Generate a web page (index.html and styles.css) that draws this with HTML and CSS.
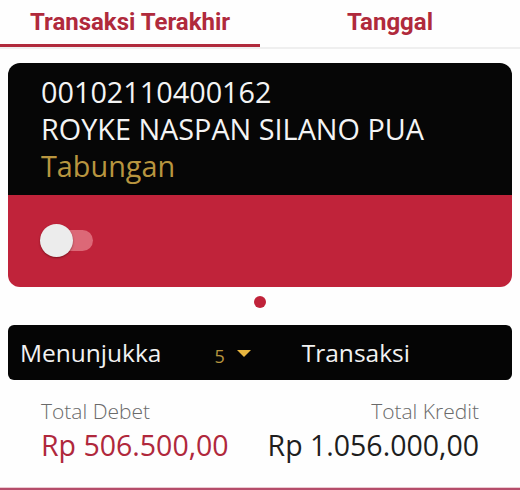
FILE: index.html
```html
<!DOCTYPE html>
<html>
<head>
<meta charset="utf-8">
<link rel="stylesheet" href="styles.css">
</head>
<body>
<div class="tabs">
  <div class="tab active">Transaksi Terakhir</div>
  <div class="tab">Tanggal</div>
</div>
<div class="card">
  <div class="card-top">
    <div class="line">00102110400162</div>
    <div class="line">ROYKE NASPAN SILANO PUA</div>
    <div class="line gold">Tabungan</div>
  </div>
  <div class="card-bottom">
    <div class="toggle"><span class="track"></span><span class="knob"></span></div>
  </div>
</div>
<div class="dots"><span class="dot"></span></div>
<div class="selector">
  <span class="sel-label">Menunjukka</span>
  <span class="sel-num">5</span>
  <span class="caret"></span>
  <span class="sel-label sel-right">Transaksi</span>
</div>
<div class="totals">
  <div class="col">
    <div class="t-label">Total Debet</div>
    <div class="t-amount red">Rp 506.500,00</div>
  </div>
  <div class="col right">
    <div class="t-label">Total Kredit</div>
    <div class="t-amount">Rp 1.056.000,00</div>
  </div>
</div>
<div class="bottom-line"></div>
</body>
</html>
```
FILE: styles.css
```css
html, body {
  margin: 0;
  padding: 0;
  background: #fefefe;
}
body {
  width: 520px;
  height: 490px;
  overflow: hidden;
  font-family: "Open Sans", "Liberation Sans", sans-serif;
}
.tabs {
  display: flex;
  height: 47px;
  border-bottom: 2px solid #efefef;
}
.tab {
  flex: 1;
  text-align: center;
  font-family: Roboto, "Liberation Sans", sans-serif;
  font-weight: 700;
  font-size: 24px;
  color: #b02a3c;
  line-height: 44px;
}
.tab.active {
  box-shadow: inset 0 -3px 0 #b02a3c;
}
.card {
  margin: 14px 8px 0;
  border-radius: 12px;
  overflow: hidden;
}
.card-top {
  background: #060606;
  padding: 10px 20px 11px 33px;
}
.line {
  color: #f4f4f4;
  font-size: 28.8px;
  line-height: 37px;
  white-space: nowrap;
}
.line.gold {
  color: #b8953f;
}
.card-bottom {
  background: #c0233a;
  height: 92px;
  display: flex;
  align-items: center;
  padding-left: 32px;
}
.toggle {
  position: relative;
  width: 53px;
  height: 34px;
}
.track {
  position: absolute;
  left: 10px;
  right: 0;
  top: 6px;
  height: 21px;
  border-radius: 11px;
  background: #dc6877;
}
.knob {
  position: absolute;
  left: 0;
  top: 0;
  width: 33px;
  height: 33px;
  border-radius: 50%;
  background: #ececec;
  box-shadow: 0 1px 2px rgba(60, 0, 0, 0.5);
}
.dots {
  display: flex;
  justify-content: center;
  margin-top: 9px;
}
.dot {
  width: 12px;
  height: 12px;
  border-radius: 50%;
  background: #c0233a;
}
.selector {
  margin: 17px 8px 0;
  height: 55px;
  background: #050505;
  border-radius: 6px;
  display: flex;
  align-items: center;
  padding-left: 12px;
}
.sel-label {
  color: #f2f2f2;
  font-size: 24.5px;
  line-height: 30px;
}
.sel-num {
  color: #b8953f;
  font-size: 18px;
  margin-left: 53px;
  margin-top: 6px;
}
.caret {
  width: 0;
  height: 0;
  border-left: 7px solid transparent;
  border-right: 7px solid transparent;
  border-top: 7px solid #e8b640;
  margin-left: 12px;
  margin-top: 2px;
}
.sel-right {
  margin-left: 51px;
}
.totals {
  display: flex;
  justify-content: space-between;
  padding: 18px 41px 0;
}
.col.right {
  text-align: right;
}
.t-label {
  color: #6a6a6a;
  font-size: 21px;
  font-weight: 300;
  line-height: 26px;
}
.t-amount {
  color: #1e1e1e;
  font-size: 28.5px;
  line-height: 36px;
  margin-top: 3px;
  white-space: nowrap;
}
.t-amount.red {
  color: #b0283c;
}
.bottom-line {
  margin-top: 24px;
  height: 4px;
  background: #b54d6a;
  border-top: 1px solid #ecc9d1;
}
```
